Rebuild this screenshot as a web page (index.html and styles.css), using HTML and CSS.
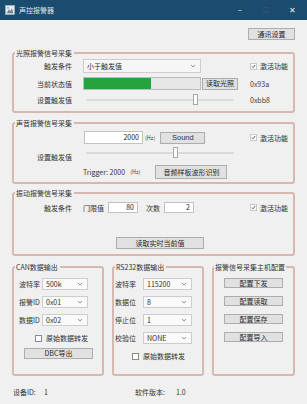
FILE: index.html
```html
<!DOCTYPE html>
<html lang="zh-CN">
<head>
<meta charset="utf-8">
<title>声控报警器</title>
<link rel="stylesheet" href="styles.css">
</head>
<body>
<div class="titlebar">
  <svg class="appicon" viewBox="0 0 10 10"><rect x="0.5" y="0.5" width="9" height="9" fill="#e4eaee" stroke="#a9bac5" stroke-width="0.6"/><path d="M1.8 8.2 L3.8 4.2 L5.3 6.2 L6.9 3.2 L8.4 8.2 Z" fill="#6d8596"/><circle cx="3" cy="2.8" r="0.9" fill="#8da2af"/></svg>
  <span class="title">声控报警器</span>
  <span class="wcs"><span class="wc">–</span><span class="wc faint">□</span><span class="wc">✕</span></span>
</div>
<main class="body">
  <div class="toprow"><button class="btn btn-comm">通讯设置</button></div>

  <fieldset class="group g1">
    <legend>光照报警信号采集</legend>
    <div class="grid grid1">
      <span class="lbl">触发条件</span>
      <div class="combo c-cond"><span>小于触发值</span><svg class="arr" viewBox="0 0 6 4"><polyline points="1,1 3,3 5,1" fill="none" stroke="#777" stroke-width="0.8"/></svg></div>
      <label class="chk"><span class="box on"><svg viewBox="0 0 8 8"><polyline points="1.5,4.2 3.3,6 6.6,1.6" fill="none" stroke="#222" stroke-width="1.2"/></svg></span>激活功能</label>

      <span class="lbl">当前状态值</span>
      <div class="pair"><div class="progress"><div class="fill" style="width:58%"></div></div><button class="btn btn-read">读取光照</button></div>
      <span class="val">0x93a</span>

      <span class="lbl">设置触发值</span>
      <div class="slider"><div class="track"></div><div class="thumb" style="left:72%"></div></div>
      <span class="val">0xbb8</span>
    </div>
  </fieldset>

  <fieldset class="group g2">
    <legend>声音报警信号采集</legend>
    <div class="grid grid2">
      <span class="lbl"></span>
      <div class="pair">
        <div class="input in-freq">2000</div><span class="hz">(Hz)</span><button class="btn btn-sound">Sound</button>
      </div>
      <label class="chk"><span class="box on"><svg viewBox="0 0 8 8"><polyline points="1.5,4.2 3.3,6 6.6,1.6" fill="none" stroke="#222" stroke-width="1.2"/></svg></span>激活功能</label>

      <span class="lbl lbl-low">设置触发值</span>
      <div class="slider"><div class="track"></div><div class="thumb" style="left:59%"></div></div>
      <span></span>

      <span class="lbl"></span>
      <div class="pair trig"><span class="trigtxt">Trigger: 2000</span><span class="hz hz2">(Hz)</span><button class="btn btn-wave">音频样板波形识别</button></div>
      <span></span>
    </div>
  </fieldset>

  <fieldset class="group g3">
    <legend>振动报警信号采集</legend>
    <div class="grid grid3">
      <span class="lbl">触发条件</span>
      <div class="pair">
        <span class="sub">门限值</span><div class="input in-small">80</div>
        <span class="sub sub2">次数</span><div class="input in-small">2</div>
      </div>
      <label class="chk"><span class="box on"><svg viewBox="0 0 8 8"><polyline points="1.5,4.2 3.3,6 6.6,1.6" fill="none" stroke="#222" stroke-width="1.2"/></svg></span>激活功能</label>
    </div>
    <button class="btn btn-realtime">读取实时当前值</button>
  </fieldset>

  <div class="bottomrow">
    <fieldset class="group g-can">
      <legend>CAN数据输出</legend>
      <div class="form">
        <div class="frow"><span class="flbl">波特率</span><div class="combo c-sm"><span>500k</span><svg class="arr" viewBox="0 0 6 4"><polyline points="1,1 3,3 5,1" fill="none" stroke="#777" stroke-width="0.8"/></svg></div></div>
        <div class="frow"><span class="flbl">报警ID</span><div class="combo c-sm"><span>0x01</span><svg class="arr" viewBox="0 0 6 4"><polyline points="1,1 3,3 5,1" fill="none" stroke="#777" stroke-width="0.8"/></svg></div></div>
        <div class="frow"><span class="flbl">数据ID</span><div class="combo c-sm"><span>0x02</span><svg class="arr" viewBox="0 0 6 4"><polyline points="1,1 3,3 5,1" fill="none" stroke="#777" stroke-width="0.8"/></svg></div></div>
        <label class="chk chk-can"><span class="box"></span>原始数据转发</label>
        <button class="btn btn-dbc">DBC导出</button>
      </div>
    </fieldset>

    <fieldset class="group g-rs">
      <legend>RS232数据输出</legend>
      <div class="form">
        <div class="frow"><span class="flbl rl">波特率</span><div class="combo c-rs"><span>115200</span><svg class="arr" viewBox="0 0 6 4"><polyline points="1,1 3,3 5,1" fill="none" stroke="#777" stroke-width="0.8"/></svg></div></div>
        <div class="frow"><span class="flbl rl">数据位</span><div class="combo c-rs"><span>8</span><svg class="arr" viewBox="0 0 6 4"><polyline points="1,1 3,3 5,1" fill="none" stroke="#777" stroke-width="0.8"/></svg></div></div>
        <div class="frow"><span class="flbl rl">停止位</span><div class="combo c-rs"><span>1</span><svg class="arr" viewBox="0 0 6 4"><polyline points="1,1 3,3 5,1" fill="none" stroke="#777" stroke-width="0.8"/></svg></div></div>
        <div class="frow"><span class="flbl rl">校验位</span><div class="combo c-rs"><span>NONE</span><svg class="arr" viewBox="0 0 6 4"><polyline points="1,1 3,3 5,1" fill="none" stroke="#777" stroke-width="0.8"/></svg></div></div>
        <label class="chk chk-rs"><span class="box"></span>原始数据转发</label>
      </div>
    </fieldset>

    <fieldset class="group g-cfg">
      <legend>报警信号采集主机配置</legend>
      <div class="cfg">
        <button class="btn btn-cfg">配置下发</button>
        <button class="btn btn-cfg">配置读取</button>
        <button class="btn btn-cfg">配置保存</button>
        <button class="btn btn-cfg">配置导入</button>
      </div>
    </fieldset>
  </div>

  <footer class="footer">
    <span class="f1">设备ID:</span><span class="f2">1</span>
    <span class="f3">软件版本:</span><span class="f4">1.0</span>
  </footer>
</main>
</body>
</html>
```

FILE: styles.css
```css
* { box-sizing: border-box; margin: 0; padding: 0; }
html, body { width: 307px; height: 404px; overflow: hidden; }
body {
  background: #f0f0f0;
  font-family: "Noto Sans CJK SC", "Noto Sans", sans-serif;
  font-size: 7px;
  line-height: 10px;
  color: #2e2e2e;
}

/* title bar */
.titlebar {
  height: 20px;
  background: #1b4b6e;
  display: flex;
  align-items: center;
  padding-left: 5px;
  color: #e6edf2;
}
.appicon { width: 10px; height: 10px; display: block; }
.title { margin-left: 4px; font-size: 7px; color: #dfe8ee; }
.wcs { margin-left: auto; display: flex; padding-right: 2px; }
.wc { width: 26px; text-align: center; font-size: 8px; color: #e8eef2; }
.wc.faint { color: #4d7290; font-size: 6px; }

.body { padding: 8px 12px 0 12px; }

/* buttons */
.btn {
  font-family: inherit;
  font-size: 7px;
  line-height: 1;
  color: #2a2a2a;
  background: #e1e1e1;
  border: 1px solid #adadad;
  display: flex;
  align-items: center;
  justify-content: center;
}
.toprow { display: flex; justify-content: flex-end; padding-right: 0; }
.btn-comm { width: 47px; height: 12px; }

/* groups */
.group {
  border: 2px solid #d6b8b0;
  border-radius: 3px;
  min-width: 0;
}
.group legend {
  margin-left: 1px;
  padding: 0 2px 0 1px;
  line-height: 10px;
  font-size: 7px;
  color: #333;
}
.g1 { margin-top: 8px; padding: 1px 0 5px 0; }
.g2 { margin-top: 5px; padding: 3px 0 3px 0; }
.g3 { margin-top: 4px; padding: 4px 0 5px 0; }

.grid {
  display: grid;
  grid-template-columns: 58px 155px 1fr;
  column-gap: 11px;
  align-items: center;
}
.grid1 { grid-template-rows: 14px 13px 12px; row-gap: 4px; }
.grid2 { grid-template-rows: 13px 17px 18px; }
.grid3 { grid-template-rows: 11px; }

.lbl { text-align: right; color: #333; white-space: nowrap; }
.lbl-low { align-self: end; line-height: 10px; margin-bottom: -1px; }
.val { color: #3a3a3a; padding-left: 1px; }

.chk { display: flex; align-items: center; gap: 3px; color: #2e2e2e; white-space: nowrap; }
.box {
  width: 7px; height: 7px;
  background: #fff;
  border: 1px solid #8a8a8a;
  display: block;
  flex: none;
}
.box svg { width: 5px; height: 5px; display: block; }
.box.on { border-color: #c8c8c8; }
.grid .chk { padding-left: 1px; }

.combo {
  display: flex;
  align-items: center;
  justify-content: space-between;
  background: #f6f6f6;
  border: 1px solid #cdcdcd;
  padding: 0 4px 0 3px;
  color: #2e2e2e;
}
.arr { width: 6px; height: 4px; display: block; }
.c-cond { width: 118px; height: 14px; }

.pair { display: flex; align-items: center; height: 100%; }
.progress {
  width: 118px; height: 13px;
  background: #e6e6e6;
  border: 1px solid #bcbcbc;
}
.fill { height: 100%; background: #26a33c; }
.btn-read { width: 36px; height: 12px; margin-left: 1px; }

.slider { position: relative; height: 12px; margin: 0 4px 0 3px; }
.track {
  position: absolute; left: 0; right: 0; top: 5px;
  height: 2px; background: #dadada; border-radius: 1px;
}
.thumb {
  position: absolute; top: 0;
  width: 5px; height: 11px;
  background: #fbfbfb;
  border: 1px solid #a8a8a8;
}

.input {
  background: #fff;
  border: 1px solid #c2c2c2;
  text-align: right;
  padding-right: 3px;
  color: #222;
}
.in-freq { width: 59px; height: 13px; margin-left: 1px; line-height: 11px; }
.hz { font-size: 5.5px; margin-left: 2px; color: #444; }
.btn-sound { width: 45px; height: 12px; margin-left: 5px; font-family: "Liberation Sans", sans-serif; font-size: 7.5px; color: #333; }
.grid2 .trig { align-self: end; height: 14px; }
.trigtxt { color: #333; }
.hz2 { margin-left: 5px; }
.btn-wave { width: 72px; height: 14px; margin-left: 15px; }

.sub { color: #333; }
.sub2 { margin-left: 8px; }
.in-small { width: 30px; height: 11px; line-height: 9px; margin-left: 4px; }
.grid3 .sub:first-child { margin-left: 0; }
.btn-realtime { width: 88px; height: 12px; margin: 24px 0 0 102px; }

/* bottom groups */
.bottomrow { display: flex; gap: 8px; margin-top: 6px; align-items: stretch; }
.g-can { width: 92px; padding: 6px 0 0 0; }
.g-rs { width: 92px; padding: 6px 0 12px 0; }
.g-cfg { width: 83px; padding: 6px 0 0 0; }
.g-cfg legend { margin-left: 0; padding: 0 1px; white-space: nowrap; }
.form { display: flex; flex-direction: column; gap: 6px; }
.frow { display: flex; align-items: center; height: 12px; }
.flbl { width: 28px; padding-left: 5px; white-space: nowrap; color: #333; }
.flbl.rl { width: 29px; padding-left: 1px; }
.c-sm { width: 46px; height: 12px; background: #fafafa; }
.c-rs { width: 49px; height: 12px; background: #fafafa; }
.chk-can { height: 12px; padding-left: 21px; gap: 4px; }
.chk-rs { height: 12px; padding-left: 18px; gap: 4px; }
.btn-dbc { width: 69px; height: 11px; margin: -2px 0 0 10px; }
.cfg { display: flex; flex-direction: column; gap: 8px; padding-left: 10px; }
.btn-cfg { width: 59px; height: 10px; }

.footer { display: flex; margin-top: 11px; line-height: 10px; color: #333; }
.f1 { width: 32px; padding-left: 1px; }
.f2 { width: 91px; }
.f3 { width: 41px; }
.f4 { }
```
